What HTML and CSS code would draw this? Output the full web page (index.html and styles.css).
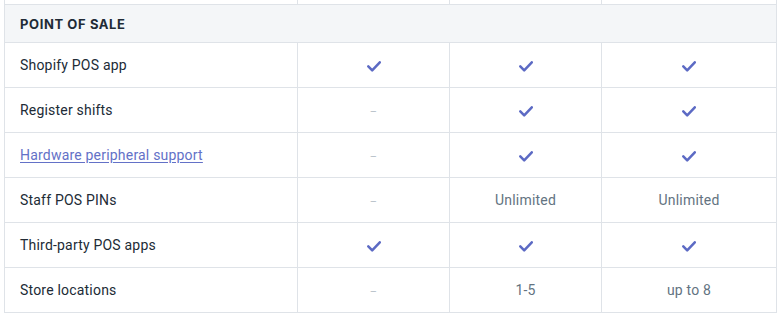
FILE: index.html
```html
<!DOCTYPE html>
<html lang="en">
<head>
<meta charset="utf-8">
<title>Plan comparison — Point of sale</title>
<link rel="stylesheet" href="styles.css">
</head>
<body>
<svg width="0" height="0" class="defs" aria-hidden="true">
  <symbol id="tick" viewBox="0 0 14 11">
    <path d="M1.3 5.3 L5.2 9.3 L12.8 1.3" fill="none" stroke="currentColor" stroke-width="2.5" stroke-linecap="round" stroke-linejoin="round"/>
  </symbol>
</svg>
<div class="compare">
  <div class="row stub">
    <div class="cell"></div><div class="cell"></div><div class="cell"></div><div class="cell"></div>
  </div>
  <div class="section">POINT OF SALE</div>

  <div class="row">
    <div class="cell label">Shopify POS app</div>
    <div class="cell"><svg class="tick"><use href="#tick"/></svg></div>
    <div class="cell"><svg class="tick"><use href="#tick"/></svg></div>
    <div class="cell"><svg class="tick"><use href="#tick"/></svg></div>
  </div>
  <div class="row">
    <div class="cell label">Register shifts</div>
    <div class="cell"><span class="none">–</span></div>
    <div class="cell"><svg class="tick"><use href="#tick"/></svg></div>
    <div class="cell"><svg class="tick"><use href="#tick"/></svg></div>
  </div>
  <div class="row">
    <div class="cell label"><a class="link" href="#">Hardware peripheral support</a></div>
    <div class="cell"><span class="none">–</span></div>
    <div class="cell"><svg class="tick"><use href="#tick"/></svg></div>
    <div class="cell"><svg class="tick"><use href="#tick"/></svg></div>
  </div>
  <div class="row">
    <div class="cell label">Staff POS PINs</div>
    <div class="cell"><span class="none">–</span></div>
    <div class="cell value">Unlimited</div>
    <div class="cell value">Unlimited</div>
  </div>
  <div class="row">
    <div class="cell label">Third-party POS apps</div>
    <div class="cell"><svg class="tick"><use href="#tick"/></svg></div>
    <div class="cell"><svg class="tick"><use href="#tick"/></svg></div>
    <div class="cell"><svg class="tick"><use href="#tick"/></svg></div>
  </div>
  <div class="row">
    <div class="cell label">Store locations</div>
    <div class="cell"><span class="none">–</span></div>
    <div class="cell value">1-5</div>
    <div class="cell value">up to 8</div>
  </div>
</div>
</body>
</html>
```

FILE: styles.css
```css
html, body {
  margin: 0;
  padding: 0;
  background: #ffffff;
}

body {
  font-family: Roboto, Inter, "Noto Sans", sans-serif;
  font-size: 14px;
  letter-spacing: 0.2px;
  color: #212b36;
}

.defs {
  position: absolute;
  width: 0;
  height: 0;
  overflow: hidden;
}

.compare {
  margin-left: 4px;
  width: 773px;
}

.row {
  display: grid;
  grid-template-columns: 293px 152px 152px 176px;
  height: 45px;
  border-bottom: 1px solid #dfe3e8;
  box-sizing: border-box;
}

.row.stub {
  height: 4px;
  border-bottom: none;
}

.cell {
  border-left: 1px solid #dfe3e8;
  display: flex;
  align-items: center;
  justify-content: center;
  box-sizing: border-box;
}

.cell:last-child {
  border-right: 1px solid #dfe3e8;
}

.cell.label {
  justify-content: flex-start;
  padding-left: 15px;
  color: #212b36;
}

.section {
  height: 39px;
  box-sizing: border-box;
  border: 1px solid #dfe3e8;
  background: #f4f6f8;
  display: flex;
  align-items: center;
  padding-left: 15px;
  font-family: Inter, Roboto, sans-serif;
  font-size: 13px;
  font-weight: 700;
  letter-spacing: 0.6px;
  color: #212b36;
}

.tick {
  width: 14px;
  height: 11px;
  color: #5c6ac4;
  margin-top: 2px;
}

.none {
  color: #b5bec7;
  font-size: 11px;
  margin-top: 3px;
}

.value {
  color: #637381;
}

.link {
  color: #6371c7;
  text-decoration: underline;
  text-underline-offset: 2px;
}
```
